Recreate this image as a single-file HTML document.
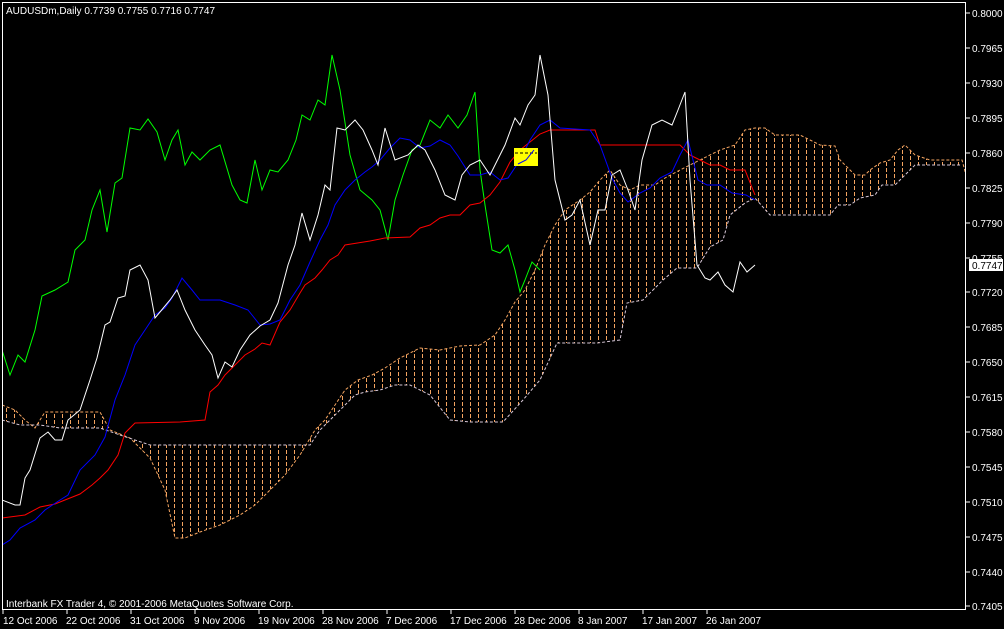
<!DOCTYPE html>
<html><head><meta charset="utf-8"><style>
html,body{margin:0;padding:0;background:#000;}
svg{display:block;}
text{font-family:"Liberation Sans",sans-serif;font-size:10px;fill:#fff;}
</style></head><body>
<svg width="1004" height="629" viewBox="0 0 1004 629" xmlns="http://www.w3.org/2000/svg">
<defs>
<pattern id="vd" x="2" y="0" width="8" height="6" patternUnits="userSpaceOnUse">
<line x1="4.5" y1="0" x2="4.5" y2="4" stroke="#f4a460" stroke-width="1"/>
</pattern>
<clipPath id="chart"><rect x="3" y="3" width="962" height="606"/></clipPath>
</defs>
<rect x="0" y="0" width="1004" height="629" fill="#000"/>
<g clip-path="url(#chart)">
<polygon fill="url(#vd)" fill-rule="nonzero" points="2,405 15,410 25,420 35,428 45,412 100,412 110,430 130,438 150,458 165,490 175,538 185,538 200,532 220,525 240,515 255,505 270,490 285,475 300,455 315,430 325,420 335,405 345,390 358,380 372,375 385,368 400,358 420,348 440,350 460,346 480,345 495,335 505,320 515,302 525,290 535,270 545,245 555,225 565,210 580,200 590,192 600,180 610,170 620,185 630,190 640,185 655,185 665,178 680,170 700,160 710,155 720,150 735,145 745,130 755,128 765,128 775,135 800,135 810,140 820,145 835,146 840,160 850,170 855,175 865,175 870,170 880,163 890,160 898,150 905,145 915,155 930,160 950,160 962,160 966,175 966,175 962,165 950,165 930,165 915,165 905,175 895,185 882,185 875,195 860,198 850,205 838,205 830,215 800,215 770,215 755,198 745,203 730,215 723,240 710,247 697,268 677,268 663,280 643,300 627,303 620,340 597,343 557,343 540,380 523,400 503,422 470,422 450,420 430,395 410,385 395,385 380,390 365,392 355,395 345,405 335,415 320,430 310,445 220,445 150,445 120,435 100,428 60,428 40,425 20,425 2,420"/>
<polyline fill="none" stroke="#f4a460" stroke-width="1" stroke-dasharray="3,2" points="2,405 15,410 25,420 35,428 45,412 100,412 110,430 130,438 150,458 165,490 175,538 185,538 200,532 220,525 240,515 255,505 270,490 285,475 300,455 315,430 325,420 335,405 345,390 358,380 372,375 385,368 400,358 420,348 440,350 460,346 480,345 495,335 505,320 515,302 525,290 535,270 545,245 555,225 565,210 580,200 590,192 600,180 610,170 620,185 630,190 640,185 655,185 665,178 680,170 700,160 710,155 720,150 735,145 745,130 755,128 765,128 775,135 800,135 810,140 820,145 835,146 840,160 850,170 855,175 865,175 870,170 880,163 890,160 898,150 905,145 915,155 930,160 950,160 962,160 966,175"/>
<polyline fill="none" stroke="#d8c8d8" stroke-width="1" stroke-dasharray="3,2" points="2,420 20,425 40,425 60,428 100,428 120,435 150,445 220,445 310,445 320,430 335,415 345,405 355,395 365,392 380,390 395,385 410,385 430,395 450,420 470,422 503,422 523,400 540,380 557,343 597,343 620,340 627,303 643,300 663,280 677,268 697,268 710,247 723,240 730,215 745,203 755,198 770,215 800,215 830,215 838,205 850,205 860,198 875,195 882,185 895,185 905,175 915,165 930,165 950,165 962,165"/>
<polyline fill="none" stroke="#00ff00" stroke-width="1" points="2,350 10,375 18,355 25,362 35,330 42,296 55,290 68,282 75,250 85,240 92,210 100,190 107,232 115,183 122,178 130,128 140,130 148,119 157,132 165,160 172,140 178,130 185,165 192,152 200,160 210,150 220,145 232,185 240,200 247,203 255,160 262,190 270,170 278,172 288,160 296,140 302,115 310,120 318,100 325,105 332,55 340,90 350,155 360,190 372,200 380,210 388,240 395,200 403,175 412,150 420,145 430,120 440,128 448,115 458,128 467,115 475,92 480,170 485,205 492,250 500,253 508,245 515,270 520,292 525,280 532,262 540,270"/>
<polyline fill="none" stroke="#ff0000" stroke-width="1" points="2,518 25,515 40,507 55,504 70,498 80,494 92,485 100,478 108,470 118,455 125,433 135,423 180,422 205,420 210,392 218,385 225,375 235,365 245,355 255,349 262,343 270,345 280,322 290,310 300,293 305,285 315,278 322,270 330,260 338,255 345,245 370,241 385,238 410,237 420,228 430,225 440,218 450,215 460,215 470,205 480,203 490,195 500,182 510,162 520,150 540,134 550,130 595,130 600,145 680,145 690,155 700,160 710,165 720,165 730,170 745,170 755,195"/>
<polyline fill="none" stroke="#0000ff" stroke-width="1" points="2,545 10,540 20,528 35,520 45,510 60,500 68,495 80,470 95,455 105,437 115,400 125,375 135,345 145,330 155,315 165,308 172,298 182,278 192,290 200,300 210,300 220,300 235,305 248,310 260,325 270,324 280,320 290,300 300,285 310,262 320,240 328,225 335,205 345,190 355,180 365,172 372,167 380,160 390,148 400,138 410,140 420,148 430,146 440,140 450,145 458,156 470,175 480,175 490,172 500,180 508,178 520,160 530,140 540,125 550,120 560,128 590,130 600,145 612,178 620,193 628,202 640,193 650,188 660,178 672,172 680,155 688,140 698,180 707,185 720,185 732,193 746,195 755,200"/>
<polyline fill="none" stroke="#ffffff" stroke-width="1" points="2,500 15,505 20,505 25,478 30,470 40,438 48,432 55,440 62,440 68,420 80,410 90,380 97,358 105,325 110,322 118,298 125,296 130,270 140,265 148,280 155,318 160,312 170,300 177,290 185,310 195,330 205,345 212,355 218,378 225,362 232,367 240,350 250,335 260,326 270,320 278,303 288,265 295,245 302,213 310,240 318,215 325,185 330,190 337,128 345,130 355,120 363,130 372,150 378,165 385,128 395,160 408,155 418,145 425,150 435,170 445,195 455,200 462,175 470,165 480,160 490,175 505,145 515,118 520,125 528,105 535,95 540,55 548,95 555,180 565,220 572,215 580,200 590,245 598,210 605,210 612,175 620,170 628,190 635,210 642,160 652,125 662,120 672,125 678,110 685,92 690,180 697,265 705,278 710,280 718,272 725,285 733,292 740,262 747,272 755,265"/>
<rect x="514" y="148" width="24" height="18" fill="#ffff00"/>
<line x1="515" y1="153" x2="537" y2="153" stroke="#000" stroke-dasharray="3,2"/>
<polyline fill="none" stroke="#0000ff" points="518,164 526,160 534,150"/>
</g>
<rect x="2.5" y="2.5" width="963" height="607" fill="none" stroke="#fff" stroke-width="1"/>
<text x="6" y="14">AUDUSDm,Daily  0.7739 0.7755 0.7716 0.7747</text>
<text x="6" y="607">Interbank FX Trader 4, © 2001-2006 MetaQuotes Software Corp.</text>
<g>
<text x="972" y="17">0.8000</text><line x1="966" y1="13" x2="970" y2="13" stroke="#fff"/>
<text x="972" y="52">0.7965</text><line x1="966" y1="48" x2="970" y2="48" stroke="#fff"/>
<text x="972" y="87">0.7930</text><line x1="966" y1="83" x2="970" y2="83" stroke="#fff"/>
<text x="972" y="122">0.7895</text><line x1="966" y1="118" x2="970" y2="118" stroke="#fff"/>
<text x="972" y="157">0.7860</text><line x1="966" y1="153" x2="970" y2="153" stroke="#fff"/>
<text x="972" y="192">0.7825</text><line x1="966" y1="188" x2="970" y2="188" stroke="#fff"/>
<text x="972" y="227">0.7790</text><line x1="966" y1="223" x2="970" y2="223" stroke="#fff"/>
<text x="972" y="262">0.7755</text><line x1="966" y1="258" x2="970" y2="258" stroke="#fff"/>
<text x="972" y="296">0.7720</text><line x1="966" y1="292" x2="970" y2="292" stroke="#fff"/>
<text x="972" y="331">0.7685</text><line x1="966" y1="327" x2="970" y2="327" stroke="#fff"/>
<text x="972" y="366">0.7650</text><line x1="966" y1="362" x2="970" y2="362" stroke="#fff"/>
<text x="972" y="401">0.7615</text><line x1="966" y1="397" x2="970" y2="397" stroke="#fff"/>
<text x="972" y="436">0.7580</text><line x1="966" y1="432" x2="970" y2="432" stroke="#fff"/>
<text x="972" y="471">0.7545</text><line x1="966" y1="467" x2="970" y2="467" stroke="#fff"/>
<text x="972" y="506">0.7510</text><line x1="966" y1="502" x2="970" y2="502" stroke="#fff"/>
<text x="972" y="541">0.7475</text><line x1="966" y1="537" x2="970" y2="537" stroke="#fff"/>
<text x="972" y="576">0.7440</text><line x1="966" y1="572" x2="970" y2="572" stroke="#fff"/>
<text x="972" y="610">0.7405</text><line x1="966" y1="606" x2="970" y2="606" stroke="#fff"/>
<rect x="969" y="259" width="34" height="12" fill="#fff"/>
<text x="972" y="269" style="fill:#000">0.7747</text>
</g>
<g>
<line x1="3" y1="610" x2="3" y2="614" stroke="#fff"/><text x="3" y="624">12 Oct 2006</text>
<line x1="67" y1="610" x2="67" y2="614" stroke="#fff"/><text x="66" y="624">22 Oct 2006</text>
<line x1="131" y1="610" x2="131" y2="614" stroke="#fff"/><text x="130" y="624">31 Oct 2006</text>
<line x1="195" y1="610" x2="195" y2="614" stroke="#fff"/><text x="194" y="624">9 Nov 2006</text>
<line x1="259" y1="610" x2="259" y2="614" stroke="#fff"/><text x="258" y="624">19 Nov 2006</text>
<line x1="323" y1="610" x2="323" y2="614" stroke="#fff"/><text x="322" y="624">28 Nov 2006</text>
<line x1="387" y1="610" x2="387" y2="614" stroke="#fff"/><text x="386" y="624">7 Dec 2006</text>
<line x1="451" y1="610" x2="451" y2="614" stroke="#fff"/><text x="450" y="624">17 Dec 2006</text>
<line x1="515" y1="610" x2="515" y2="614" stroke="#fff"/><text x="514" y="624">28 Dec 2006</text>
<line x1="579" y1="610" x2="579" y2="614" stroke="#fff"/><text x="578" y="624">8 Jan 2007</text>
<line x1="643" y1="610" x2="643" y2="614" stroke="#fff"/><text x="642" y="624">17 Jan 2007</text>
<line x1="707" y1="610" x2="707" y2="614" stroke="#fff"/><text x="706" y="624">26 Jan 2007</text>
</g>
</svg>
</body></html>
